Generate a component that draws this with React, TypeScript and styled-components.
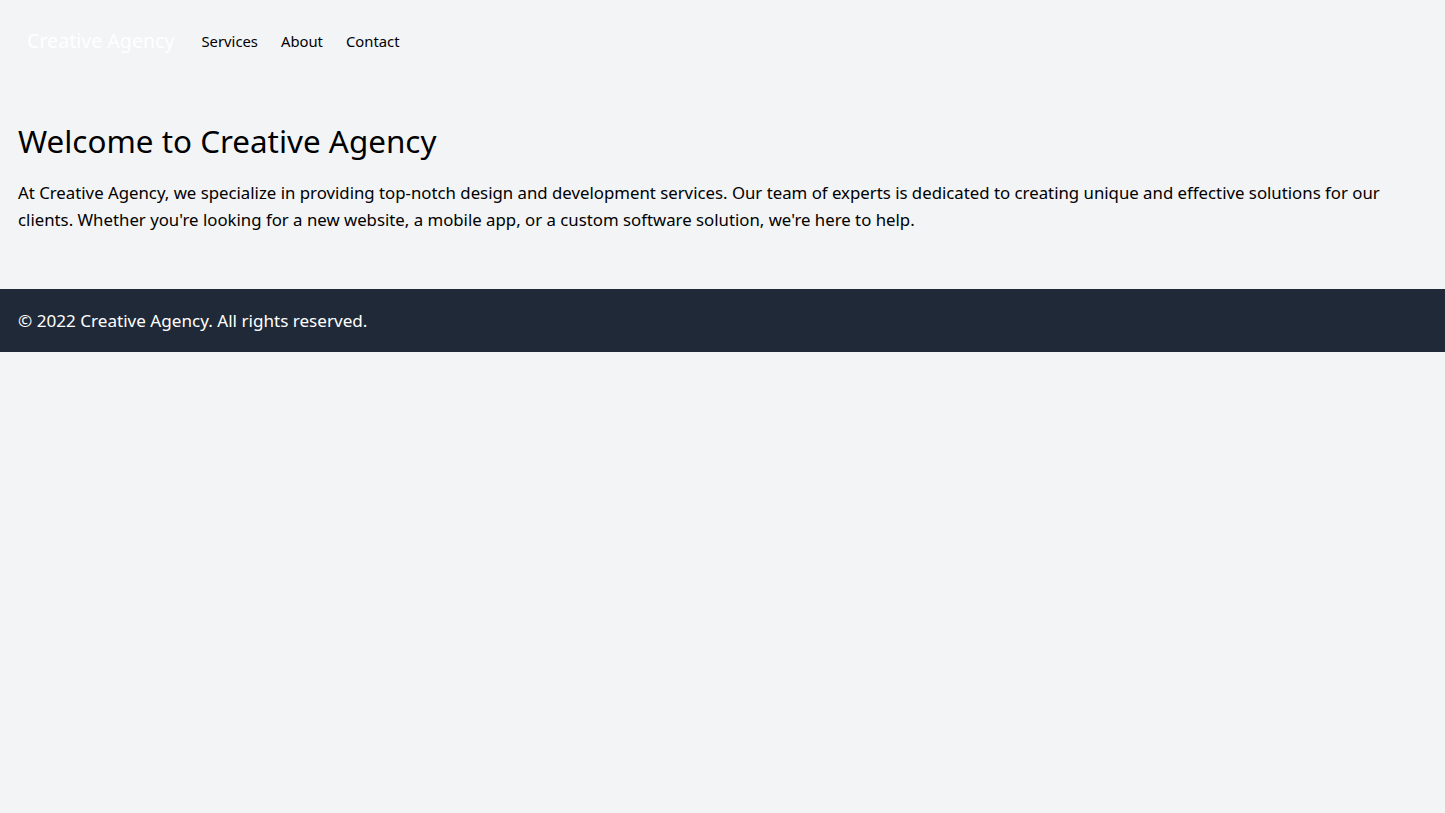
import React from "react";
import styled, { createGlobalStyle } from "styled-components";

const Global = createGlobalStyle`
  html, body { margin: 0; padding: 0; background: #f3f4f6; }
  body { font-family: "Noto Sans", "Open Sans", sans-serif; color: #000; }
  * { box-sizing: border-box; }
`;

const Page = styled.div`
  min-height: 813px;
  background: #f3f4f6;
`;

const Nav = styled.nav`
  display: flex;
  align-items: center;
  padding: 0 27px;
  height: 82px;
`;

const Logo = styled.a`
  font-size: 19.6px;
  line-height: 28px;
  color: #fff;
  text-decoration: none;
  margin-right: 27px;
`;

const NavLinks = styled.ul`
  display: flex;
  gap: 23px;
  list-style: none;
  margin: 0;
  padding: 0;
`;

const NavLink = styled.a`
  font-size: 14.8px;
  line-height: 20px;
  color: #000;
  text-decoration: none;
`;

const Main = styled.main`
  padding: 37px 18px 56px;
`;

const Title = styled.h1`
  font-size: 31.4px;
  font-weight: 400;
  line-height: 44px;
  margin: 0 0 16px;
`;

const Text = styled.p`
  font-size: 16.8px;
  line-height: 27px;
  margin: 0;
`;

const Footer = styled.footer`
  background: #1f2937;
  color: #fff;
  height: 63px;
  display: flex;
  align-items: center;
  padding: 0 18px;
  font-size: 17.1px;
`;

export default function App() {
  return (
    <Page>
      <Global />
      <Nav>
        <Logo href="#">Creative Agency</Logo>
        <NavLinks>
          <li><NavLink href="#">Services</NavLink></li>
          <li><NavLink href="#">About</NavLink></li>
          <li><NavLink href="#">Contact</NavLink></li>
        </NavLinks>
      </Nav>
      <Main>
        <Title>Welcome to Creative Agency</Title>
        <Text>
          At Creative Agency, we specialize in providing top-notch design and development services. Our team of experts is dedicated to creating unique and effective solutions for our clients. Whether you're looking for a new website, a mobile app, or a custom software solution, we're here to help.
        </Text>
      </Main>
      <Footer>© 2022 Creative Agency. All rights reserved.</Footer>
    </Page>
  );
}
